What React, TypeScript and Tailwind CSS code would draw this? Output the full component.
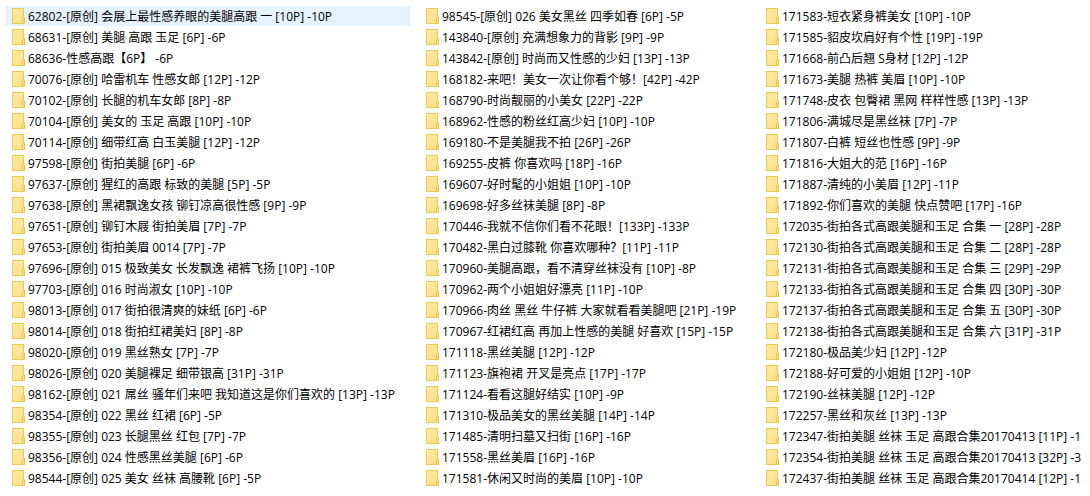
import { useState } from 'react'
import clsx from 'clsx'

const columns: string[][] = [
  [
    '62802-[原创] 会展上最性感养眼的美腿高跟 一 [10P] -10P',
    '68631-[原创] 美腿 高跟 玉足 [6P] -6P',
    '68636-性感高跟【6P】 -6P',
    '70076-[原创] 哈雷机车 性感女郎 [12P] -12P',
    '70102-[原创] 长腿的机车女郎 [8P] -8P',
    '70104-[原创] 美女的 玉足 高跟 [10P] -10P',
    '70114-[原创] 细带红高 白玉美腿 [12P] -12P',
    '97598-[原创] 街拍美腿 [6P] -6P',
    '97637-[原创] 猩红的高跟 标致的美腿 [5P] -5P',
    '97638-[原创] 黑裙飘逸女孩 铆钉凉高很性感 [9P] -9P',
    '97651-[原创] 铆钉木屐 街拍美眉 [7P] -7P',
    '97653-[原创] 街拍美眉 0014 [7P] -7P',
    '97696-[原创] 015 极致美女 长发飘逸 裙裤飞扬 [10P] -10P',
    '97703-[原创] 016 时尚淑女 [10P] -10P',
    '98013-[原创] 017 街拍很清爽的妹纸 [6P] -6P',
    '98014-[原创] 018 街拍红裙美妇 [8P] -8P',
    '98020-[原创] 019 黑丝熟女 [7P] -7P',
    '98026-[原创] 020 美腿裸足 细带银高 [31P] -31P',
    '98162-[原创] 021 屌丝 骚年们来吧 我知道这是你们喜欢的 [13P] -13P',
    '98354-[原创] 022 黑丝 红裙 [6P] -5P',
    '98355-[原创] 023 长腿黑丝 红包 [7P] -7P',
    '98356-[原创] 024 性感黑丝美腿 [6P] -6P',
    '98544-[原创] 025 美女 丝袜 高腰靴 [6P] -5P',
  ],
  [
    '98545-[原创] 026 美女黑丝 四季如春 [6P] -5P',
    '143840-[原创] 充满想象力的背影 [9P] -9P',
    '143842-[原创] 时尚而又性感的少妇 [13P] -13P',
    '168182-来吧！美女一次让你看个够！[42P] -42P',
    '168790-时尚靓丽的小美女 [22P] -22P',
    '168962-性感的粉丝红高少妇 [10P] -10P',
    '169180-不是美腿我不拍 [26P] -26P',
    '169255-皮裤 你喜欢吗 [18P] -16P',
    '169607-好时髦的小姐姐 [10P] -10P',
    '169698-好多丝袜美腿 [8P] -8P',
    '170446-我就不信你们看不花眼！[133P] -133P',
    '170482-黑白过膝靴 你喜欢哪种？[11P] -11P',
    '170960-美腿高跟，看不清穿丝袜没有 [10P] -8P',
    '170962-两个小姐姐好漂亮 [11P] -10P',
    '170966-肉丝 黑丝 牛仔裤 大家就看看美腿吧 [21P] -19P',
    '170967-红裙红高 再加上性感的美腿 好喜欢 [15P] -15P',
    '171118-黑丝美腿 [12P] -12P',
    '171123-旗袍裙 开叉是亮点 [17P] -17P',
    '171124-看看这腿好结实 [10P] -9P',
    '171310-极品美女的黑丝美腿 [14P] -14P',
    '171485-清明扫墓又扫街 [16P] -16P',
    '171558-黑丝美眉 [16P] -16P',
    '171581-休闲又时尚的美眉 [10P] -10P',
  ],
  [
    '171583-短衣紧身裤美女 [10P] -10P',
    '171585-貂皮坎肩好有个性 [19P] -19P',
    '171668-前凸后翘 S身材 [12P] -12P',
    '171673-美腿 热裤 美眉 [10P] -10P',
    '171748-皮衣 包臀裙 黑网 样样性感 [13P] -13P',
    '171806-满城尽是黑丝袜 [7P] -7P',
    '171807-白裤 短丝也性感 [9P] -9P',
    '171816-大姐大的范 [16P] -16P',
    '171887-清纯的小美眉 [12P] -11P',
    '171892-你们喜欢的美腿 快点赞吧 [17P] -16P',
    '172035-街拍各式高跟美腿和玉足 合集 一 [28P] -28P',
    '172130-街拍各式高跟美腿和玉足 合集 二 [28P] -28P',
    '172131-街拍各式高跟美腿和玉足 合集 三 [29P] -29P',
    '172133-街拍各式高跟美腿和玉足 合集 四 [30P] -30P',
    '172137-街拍各式高跟美腿和玉足 合集 五 [30P] -30P',
    '172138-街拍各式高跟美腿和玉足 合集 六 [31P] -31P',
    '172180-极品美少妇 [12P] -12P',
    '172188-好可爱的小姐姐 [12P] -10P',
    '172190-丝袜美腿 [12P] -12P',
    '172257-黑丝和灰丝 [13P] -13P',
    '172347-街拍美腿 丝袜 玉足 高跟合集20170413 [11P] -1',
    '172354-街拍美腿 丝袜 玉足 高跟合集20170413 [32P] -3',
    '172437-街拍美腿 丝袜 玉足 高跟合集20170414 [12P] -1',
  ],
]

function FolderIcon() {
  return (
    <svg className="h-4 w-[13px] shrink-0" viewBox="0 0 13 16" aria-hidden="true">
      <defs>
        <linearGradient id="folder" x1="0" y1="0" x2="1" y2="1">
          <stop offset="0" stopColor="#ffeba6" />
          <stop offset="1" stopColor="#fddf85" />
        </linearGradient>
      </defs>
      <rect x="0.5" y="0.5" width="11" height="15" fill="url(#folder)" stroke="#ecc953" />
      <path d="M10.5 15.5V10.5L11.5 9.5H12.5V15.5Z" fill="#fde391" stroke="#e9c348" />
    </svg>
  )
}

interface FolderRowProps {
  name: string
  selected: boolean
  onSelect: () => void
}

function FolderRow({ name, selected, onSelect }: FolderRowProps) {
  return (
    <li>
      <button
        type="button"
        onClick={onSelect}
        className={clsx(
          'flex h-5 w-full items-center gap-[3px] overflow-hidden pl-1.5 text-left whitespace-nowrap',
          selected && 'bg-[#e5f3ff]'
        )}
      >
        <FolderIcon />
        <span className="pt-0.5">{name}</span>
      </button>
    </li>
  )
}

export default function App() {
  const [selected, setSelected] = useState(columns[0][0])

  return (
    <main
      lang="zh-CN"
      className="grid min-h-screen grid-cols-[404fr_330fr_330fr] gap-x-2.5 overflow-hidden bg-white pt-1.5 pl-1.5 font-['Open_Sans','Noto_Sans_CJK_SC',sans-serif] text-xs text-black"
    >
      {columns.map((names) => (
        <ul key={names[0]} className="flex min-w-0 flex-col gap-px">
          {names.map((name) => (
            <FolderRow
              key={name}
              name={name}
              selected={name === selected}
              onSelect={() => setSelected(name)}
            />
          ))}
        </ul>
      ))}
    </main>
  )
}
